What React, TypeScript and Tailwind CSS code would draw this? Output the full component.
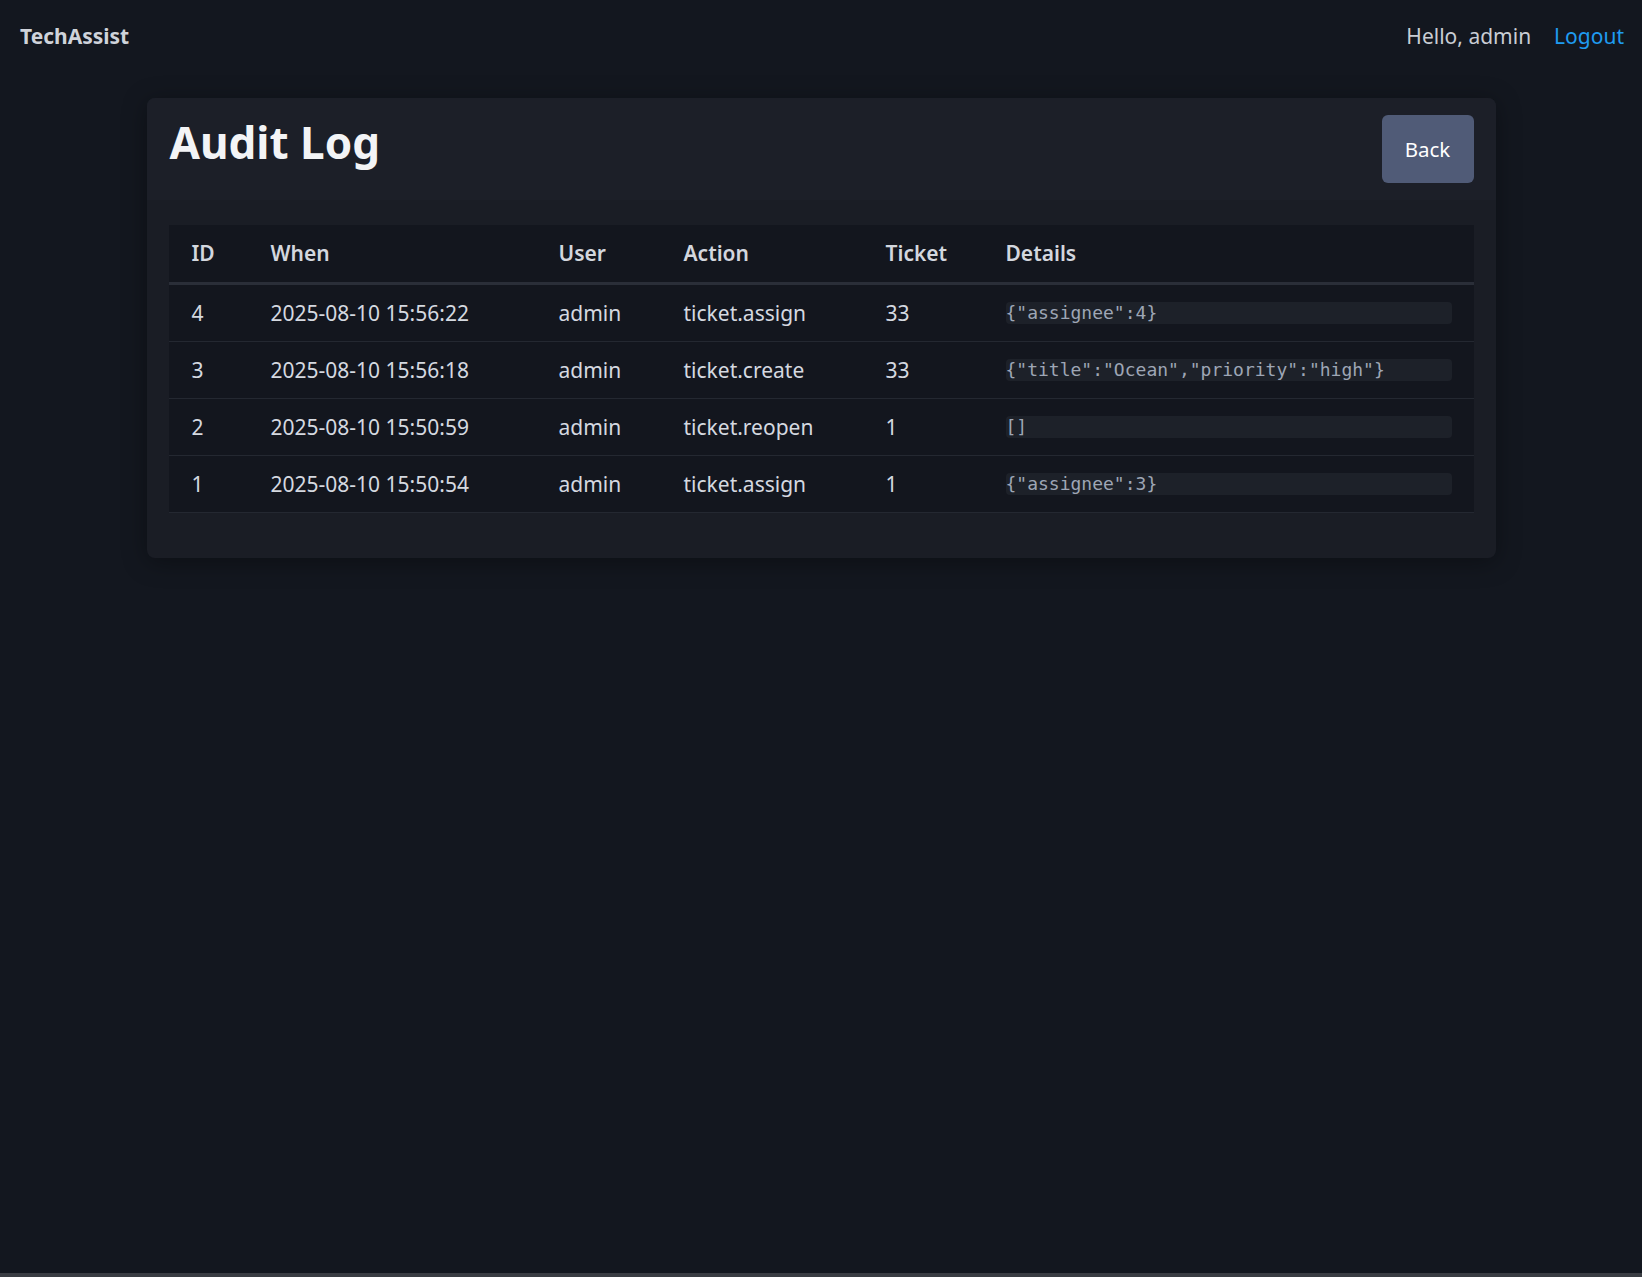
import React from "react";

const rows = [
  { id: 4, when: "2025-08-10 15:56:22", user: "admin", action: "ticket.assign", ticket: "33", details: '{"assignee":4}' },
  { id: 3, when: "2025-08-10 15:56:18", user: "admin", action: "ticket.create", ticket: "33", details: '{"title":"Ocean","priority":"high"}' },
  { id: 2, when: "2025-08-10 15:50:59", user: "admin", action: "ticket.reopen", ticket: "1", details: "[]" },
  { id: 1, when: "2025-08-10 15:50:54", user: "admin", action: "ticket.assign", ticket: "1", details: '{"assignee":3}' },
];

export default function App() {
  return (
    <div className="h-[1277px] flex flex-col bg-[#13171f] font-['Noto_Sans',sans-serif] text-[#d5d9e0]">
      <div className="flex-1">
        <nav className="h-[73px] flex items-center justify-between pl-[20px] pr-[18px]">
          <div className="text-[21px] font-bold text-[#cfd3da]">TechAssist</div>
          <div className="flex items-center gap-[23px] text-[21px]">
            <span className="text-[#c9cdd4]">Hello, admin</span>
            <a className="text-[#1f9bf0]" href="#">Logout</a>
          </div>
        </nav>

        <div className="mt-[25px] mx-auto w-[1349px] rounded-[8px] bg-[#1a1d25] shadow-[0_4px_24px_rgba(0,0,0,0.35)] overflow-hidden">
          <div className="flex items-start justify-between pl-[23px] pr-[22px] py-[17px] bg-[#1c1f28]">
            <h1 className="text-[44px] leading-[54px] font-bold text-[#f3f4f6]">Audit Log</h1>
            <button className="w-[92px] h-[68px] rounded-[6px] bg-[#505b77] text-[20.5px] text-white">Back</button>
          </div>
          <div className="px-[22px] pt-[25px] pb-[45px]">
            <table className="w-full table-fixed border-collapse bg-[#13161e] text-[21px]">
              <thead>
                <tr className="border-b-[3px] border-[#2a2e38]">
                  <th className="w-[79px] text-left font-semibold pl-[23px] pr-[10px] py-[14px] leading-[29px] text-[#d3d7de]">ID</th>
                  <th className="w-[288px] text-left font-semibold pl-[23px] pr-[10px] py-[14px] leading-[29px] text-[#d3d7de]">When</th>
                  <th className="w-[125px] text-left font-semibold pl-[23px] pr-[10px] py-[14px] leading-[29px] text-[#d3d7de]">User</th>
                  <th className="w-[202px] text-left font-semibold pl-[23px] pr-[10px] py-[14px] leading-[29px] text-[#d3d7de]">Action</th>
                  <th className="w-[121px] text-left font-semibold pl-[23px] pr-[10px] py-[14px] leading-[29px] text-[#d3d7de]">Ticket</th>
                  <th className="text-left font-semibold pl-[22px] pr-[22px] py-[14px] leading-[29px] text-[#d3d7de]">Details</th>
                </tr>
              </thead>
              <tbody>
                {rows.map((r) => (
                  <tr key={r.id} className="border-b border-[#242831]">
                    <td className="pl-[23px] pr-[10px] py-[14px] leading-[28px]">{r.id}</td>
                    <td className="pl-[23px] pr-[10px] py-[14px] leading-[28px] whitespace-nowrap">{r.when}</td>
                    <td className="pl-[23px] pr-[10px] py-[14px] leading-[28px]">{r.user}</td>
                    <td className="pl-[23px] pr-[10px] py-[14px] leading-[28px]">{r.action}</td>
                    <td className="pl-[23px] pr-[10px] py-[14px] leading-[28px]">{r.ticket}</td>
                    <td className="pl-[22px] pr-[22px] py-[14px] leading-[28px] align-middle">
                      <code className="block rounded-[4px] bg-[#1d2129] px-0 text-[18px] leading-[22px] text-[#9ea6b5] font-['DejaVu_Sans_Mono',monospace] whitespace-pre">{r.details}</code>
                    </td>
                  </tr>
                ))}
              </tbody>
            </table>
          </div>
        </div>
      </div>
      <div className="h-[4px] bg-[#3a3d43]" />
    </div>
  );
}
